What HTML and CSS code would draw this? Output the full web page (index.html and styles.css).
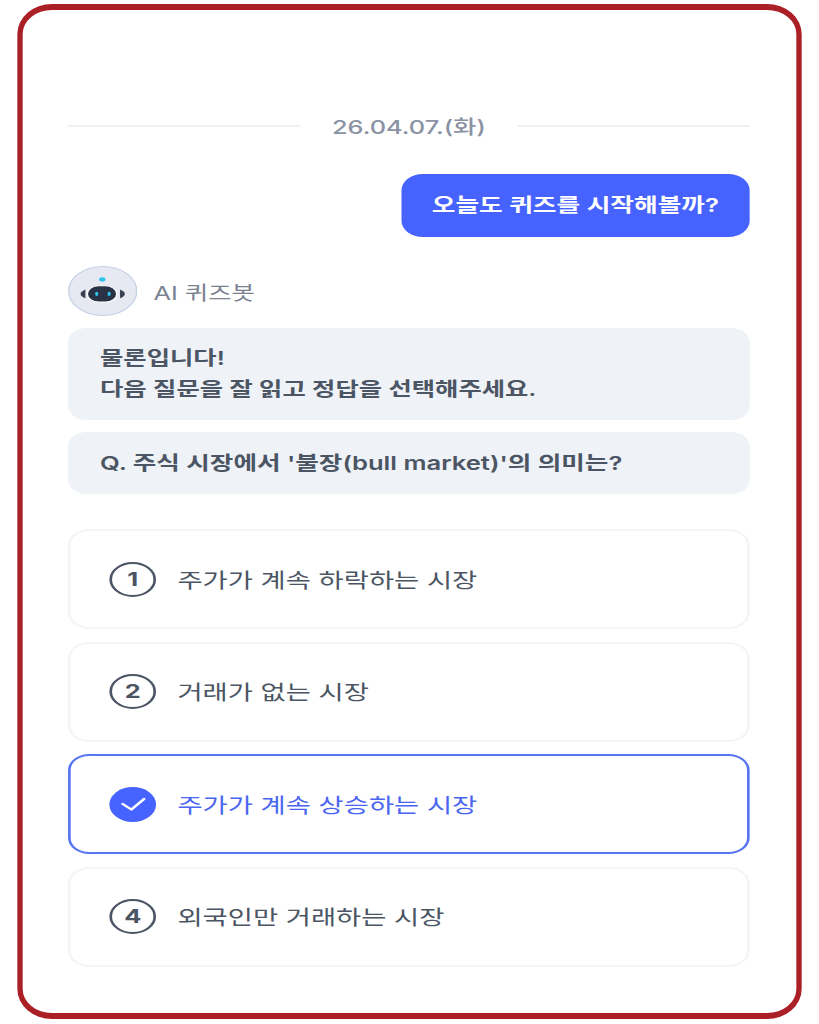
FILE: index.html
```html
<!DOCTYPE html>
<html lang="ko">
<head>
    <meta charset="UTF-8">
    <meta name="viewport" content="width=device-width, initial-scale=1.0">
    <title>AI 퀴즈봇</title>
    <link rel="stylesheet" href="styles.css">
</head>
<body>
    <div class="stretch">
        <div class="frame">
            <div class="date-row">
                <span class="date-line"></span>
                <span class="date">26.04.07.(화)</span>
                <span class="date-line"></span>
            </div>

            <div class="my-row">
                <div class="my-bubble">오늘도 퀴즈를 시작해볼까?</div>
            </div>

            <div class="bot-row">
                <svg class="avatar" viewBox="0 0 52 52" preserveAspectRatio="none">
                    <circle cx="26" cy="26" r="25.5" fill="#e6e9f2" stroke="#c5d0e6" stroke-width="1"/>
                    <ellipse cx="25.7" cy="14" rx="2.4" ry="2.2" fill="#2cc3ee"/>
                    <path d="M13 24.5 L13 33.5 Q9 31 9.5 29 Q9 27 13 24.5 Z" fill="#3a4152"/>
                    <path d="M39 24.5 L39 33.5 Q43 31 42.5 29 Q43 27 39 24.5 Z" fill="#3a4152"/>
                    <rect x="14.5" y="20.5" width="22" height="17" rx="8.5" fill="#2a3245" stroke="#fff" stroke-width="1"/>
                    <ellipse cx="21.5" cy="29" rx="1.2" ry="2.2" fill="#2cc3ee"/>
                    <ellipse cx="30.8" cy="29" rx="1.2" ry="2.2" fill="#2cc3ee"/>
                </svg>
                <span class="bot-name">AI 퀴즈봇</span>
            </div>

            <div class="bot-bubble">물론입니다!<br>다음 질문을 잘 읽고 정답을 선택해주세요.</div>
            <div class="bot-bubble question">Q. 주식 시장에서 '불장(bull market)'의 의미는?</div>

            <div class="options">
                <div class="option">
                    <span class="num">1</span>
                    <span class="option-text">주가가 계속 하락하는 시장</span>
                </div>
                <div class="option">
                    <span class="num">2</span>
                    <span class="option-text">거래가 없는 시장</span>
                </div>
                <div class="option selected">
                    <span class="num">
                        <svg class="check" viewBox="0 0 20 20">
                            <polyline points="2,10 8.5,15.5 18,5" fill="none" stroke="#fff" stroke-width="2.2" stroke-linecap="round" stroke-linejoin="round"/>
                        </svg>
                    </span>
                    <span class="option-text">주가가 계속 상승하는 시장</span>
                </div>
                <div class="option">
                    <span class="num">4</span>
                    <span class="option-text">외국인만 거래하는 시장</span>
                </div>
            </div>
        </div>
    </div>
</body>
</html>
```

FILE: styles.css
```css
* {
    box-sizing: border-box;
}

body {
    margin: 0;
    background-color: #fff;
    font-family: Inter, "Noto Sans CJK KR", sans-serif;
    font-size: 19px;
    color: #4b5563;
    overflow: hidden;
}

.stretch {
    width: 614px;
    padding: 4px 0 0 13px;
    transform: scaleX(1.3339);
    transform-origin: left top;
}

.frame {
    width: 588px;
    height: 1015px;
    padding: 102px 35px 0 34px;
    border: solid #ab1f26;
    border-width: 6px 4px;
    border-radius: 26px / 30px;
}

.date-row {
    display: flex;
    align-items: center;
    gap: 24px;
    height: 27px;
}

.date-line {
    flex: 1;
    height: 2px;
    background-color: #eef0f4;
}

.date {
    color: #8a92a4;
    font-weight: 500;
}

.my-row {
    display: flex;
    justify-content: flex-end;
    margin-top: 35px;
}

.my-bubble {
    display: flex;
    align-items: center;
    height: 63px;
    padding: 0 23px 3px;
    border-radius: 16px;
    background-color: #4663ff;
    color: #fff;
    font-size: 19.3px;
    font-weight: 600;
}

.bot-row {
    display: flex;
    align-items: center;
    gap: 12px;
    margin-top: 29px;
    color: #7b8292;
}

.avatar {
    width: 52px;
    height: 50px;
}

.bot-bubble {
    margin-top: 12px;
    padding: 15px 24px;
    line-height: 31px;
    border-radius: 14px;
    background-color: #eff2f7;
    font-weight: 600;
}

.question {
    padding: 16px 24px 15px;
    font-size: 19.2px;
}

.options {
    display: flex;
    flex-direction: column;
    gap: 12.5px;
    margin-top: 35px;
}

.option {
    display: flex;
    align-items: center;
    gap: 16px;
    height: 100px;
    padding-left: 29px;
    border: 2px solid #f3f5f9;
    border-radius: 16px;
    font-size: 20.5px;
}

.option-text {
    margin-bottom: 1px;
}

.num {
    display: flex;
    align-items: center;
    justify-content: center;
    width: 35px;
    height: 35px;
    border: 2px solid #4b5563;
    border-radius: 50%;
    font-size: 19px;
    font-weight: 700;
}

.selected {
    border-color: #5875f3;
    color: #4a66f0;
}

.selected .num {
    border: 0;
    background-color: #4663ff;
}

.check {
    width: 20px;
    height: 20px;
}
```
